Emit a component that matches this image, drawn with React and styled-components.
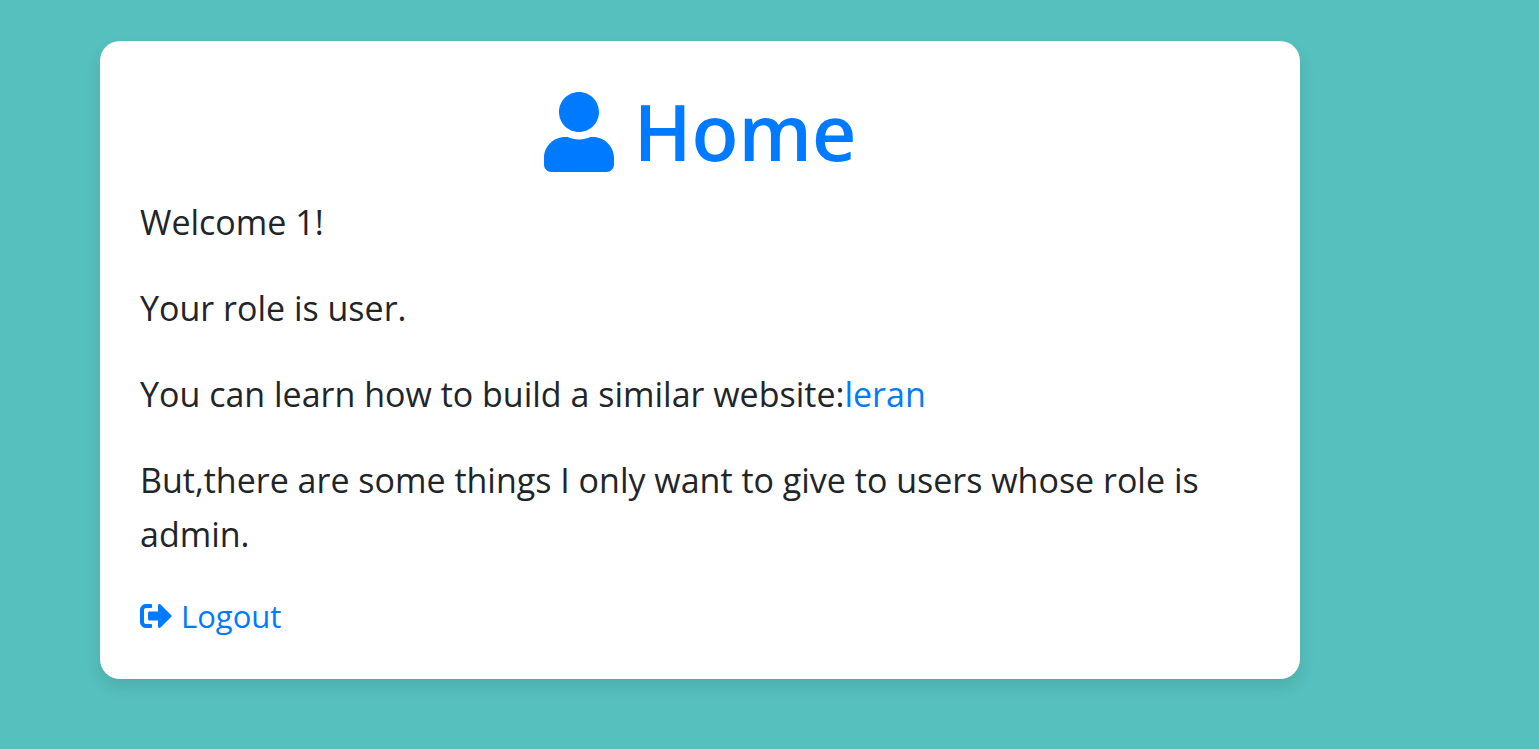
import React from "react";
import styled, { createGlobalStyle } from "styled-components";
import { FaUser, FaSignOutAlt } from "react-icons/fa";

const GlobalStyle = createGlobalStyle`
  *, *::before, *::after { box-sizing: border-box; }
  body {
    margin: 0;
    min-height: 100vh;
    background: #56c0be;
    color: #212529;
    font-family: "Segoe UI", "Open Sans", "Noto Sans", sans-serif;
    font-size: 34px;
    line-height: 54px;
  }
`;

const Page = styled.main`
  padding: 41px 239px 70px 100px;
`;

const Card = styled.section`
  padding: 40px;
  max-width: 1200px;
  background: #fff;
  border-radius: 20px;
  box-shadow: 0 8px 16px rgba(0, 0, 0, 0.1);
`;

const Title = styled.h1`
  display: flex;
  justify-content: center;
  align-items: center;
  gap: 20px;
  margin: 0 0 12px;
  color: #007bff;
  font-size: 77px;
  font-weight: 600;
  line-height: 102px;
`;

const UserIcon = styled(FaUser)`
  width: 70px;
  height: 80px;
`;

const Text = styled.p`
  margin: 0 0 32px;
`;

const Link = styled.a`
  color: #007bff;
  text-decoration: none;
`;

const LogoutLink = styled(Link)`
  display: flex;
  width: fit-content;
  align-items: center;
  gap: 9px;
  font-size: 31px;
  line-height: 46px;
`;

const LogoutIcon = styled(FaSignOutAlt)`
  width: 32px;
  height: 32px;
`;

export default function App() {
  return (
    <>
      <GlobalStyle />
      <Page>
        <Card>
          <Title><UserIcon aria-hidden="true" />Home</Title>
          <Text>Welcome 1!</Text>
          <Text>Your role is user.</Text>
          <Text>You can learn how to build a similar website:<Link href="#learn">leran</Link></Text>
          <Text>But,there are some things I only want to give to users whose role is admin.</Text>
          <LogoutLink href="#logout"><LogoutIcon aria-hidden="true" />Logout</LogoutLink>
        </Card>
      </Page>
    </>
  );
}
